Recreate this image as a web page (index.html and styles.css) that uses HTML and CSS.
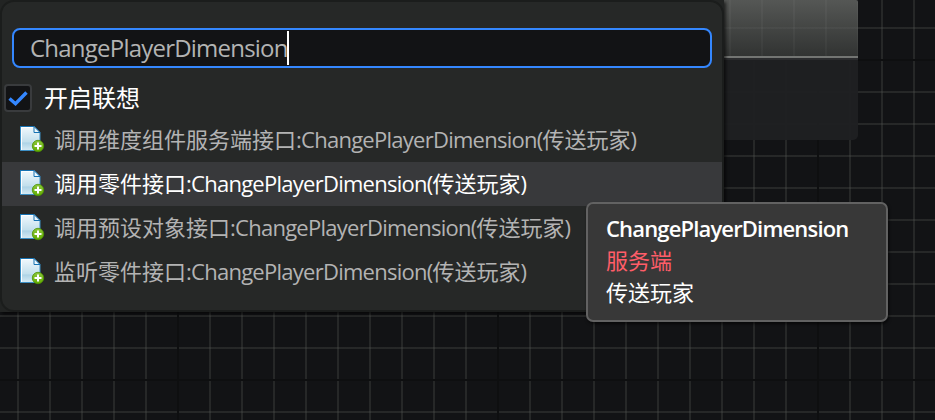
FILE: index.html
```html
<!DOCTYPE html>
<html lang="zh-CN">
<head>
<meta charset="utf-8">
<title>ChangePlayerDimension</title>
<link rel="stylesheet" href="styles.css">
</head>
<body>
<svg class="defs" aria-hidden="true">
  <defs>
    <linearGradient id="paper" x1="0" y1="0" x2="0" y2="1"><stop offset="0" stop-color="#f2f9fd"/><stop offset=".65" stop-color="#c2dfec"/><stop offset=".68" stop-color="#add3e6"/><stop offset="1" stop-color="#d8ebf4"/></linearGradient>
    <linearGradient id="plus" x1="0" y1="0" x2="0" y2="1"><stop offset="0" stop-color="#8cc63c"/><stop offset="1" stop-color="#62ad00"/></linearGradient>
    <symbol id="doc-add" viewBox="0 0 26 28">
      <path d="M1.5 1.5H15l6 6V25.5H1.5Z" fill="url(#paper)" stroke="#3c8fc4"/>
      <path d="M2.5 25V2.5H14" fill="none" stroke="#fff"/>
      <path d="M1 1.5H15" stroke="#1672b2"/>
      <path d="M15 1.5v6h6Z" fill="#edf7fc" stroke="#1672b2"/>
      <circle cx="19" cy="21" r="5.7" fill="url(#plus)" stroke="#4c9200" stroke-width=".8"/>
      <path d="M19 17.5v7M15.5 21h7" stroke="#fff" stroke-width="2"/>
    </symbol>
  </defs>
</svg>
<main class="canvas">
  <div class="node"><div class="node-head"></div></div>
  <section class="popup"><div class="panel">
    <div class="search"><span class="query">ChangePlayerDimension</span><span class="caret"></span></div>
    <div class="suggest">
      <span class="checkbox"><svg width="20" height="16" viewBox="0 0 20 16"><path d="M1.5 8.5l6 5.2L18.5 2.5" fill="none" stroke="#3487ff" stroke-width="3.4"/></svg></span>
      <span class="suggest-label">开启联想</span>
    </div>
    <ul class="results">
      <li class="row"><svg class="icon"><use href="#doc-add"/></svg><span class="name">调用维度组件服务端接口<span class="latin">:ChangePlayerDimension(</span>传送玩家<span class="latin">)</span></span></li>
      <li class="row selected"><svg class="icon"><use href="#doc-add"/></svg><span class="name">调用零件接口<span class="latin">:ChangePlayerDimension(</span>传送玩家<span class="latin">)</span></span></li>
      <li class="row"><svg class="icon"><use href="#doc-add"/></svg><span class="name">调用预设对象接口<span class="latin">:ChangePlayerDimension(</span>传送玩家<span class="latin">)</span></span></li>
      <li class="row"><svg class="icon"><use href="#doc-add"/></svg><span class="name">监听零件接口<span class="latin">:ChangePlayerDimension(</span>传送玩家<span class="latin">)</span></span></li>
    </ul>
  </div></section>
  <aside class="tooltip">
    <div class="tip-title">ChangePlayerDimension</div>
    <div class="tip-side">服务端</div>
    <div>传送玩家</div>
  </aside>
</main>
</body>
</html>
```
FILE: styles.css
```css
* { box-sizing: border-box; }
body { margin: 0; background: #121315; font-family: "Open Sans", "Noto Sans CJK SC", sans-serif; }
.defs { position: absolute; width: 0; height: 0; }
.canvas {
  position: relative; width: 935px; height: 420px; overflow: hidden;
  background:
    linear-gradient(90deg, #0e0f10 2px, transparent 2px) 177px 0 / 320px 100%,
    linear-gradient(#0e0f10 2px, transparent 2px) 0 59px / 100% 320px,
    linear-gradient(90deg, rgba(90, 92, 88, .28) 2px, transparent 2px) 17px 0 / 32px 100%,
    linear-gradient(rgba(90, 92, 88, .28) 2px, transparent 2px) 0 27px / 100% 32px,
    #121315;
}
.node { position: absolute; left: 500px; top: 0; width: 358px; height: 140px; border-radius: 0 2px 5px 5px; background: rgba(31, 32, 34, .97); }
.node-head {
  height: 60px; border-bottom: 2px solid #2b2c2e; border-radius: 0 2px 0 0;
  box-shadow: inset 0 -2px #737573;
  background:
    linear-gradient(90deg, rgba(255, 255, 255, .03) 2px, transparent 2px) 5px 0 / 32px 100%,
    linear-gradient(transparent 27px, rgba(255, 255, 255, .03) 27px 29px, transparent 29px),
    linear-gradient(#555755, #303231);
}
.popup { position: relative; width: 724px; height: 312px; background: #222423; box-shadow: 2px 2px 3px rgba(0, 0, 0, .6); }
.panel { height: 312px; border: 2px solid #1b1d1c; border-radius: 14px; background: #262827; padding-top: 26px; }
.search { display: flex; align-items: center; width: 700px; height: 40px; margin-left: 10px; padding-left: 16px; border: 2px solid #3487ff; border-radius: 8px; background: #121315; color: #b3b3b3; font-size: 24px; line-height: 36px; }
.query { width: 257px; white-space: nowrap; letter-spacing: -.78px; }
.caret { width: 2px; height: 34px; background: #fff; }
.suggest { display: flex; align-items: center; height: 28px; margin: 16px 0 0 2px; }
.checkbox { display: flex; align-items: center; justify-content: center; width: 28px; height: 28px; border: 2px solid #393b3d; border-radius: 4px; background: #121315; }
.suggest-label { margin-left: 12px; color: #fff; font-size: 24px; line-height: 28px; }
.results { list-style: none; margin: 6px 0 0; padding: 0; }
.row { display: flex; align-items: center; height: 44px; padding-left: 17px; color: #b3b3b3; font-size: 22px; line-height: 30px; white-space: nowrap; }
.name { padding-bottom: 2px; }
.selected { background: #38393b; color: #fff; }
.icon { width: 26px; height: 28px; margin: -3px 9px 0 0; }
.latin { letter-spacing: -.74px; }
.tooltip { position: absolute; left: 586px; top: 202px; width: 302px; height: 120px; padding: 8px 18px; border: 2px solid #626262; border-radius: 7px; background: #383838; color: #fff; font-size: 22px; line-height: 32px; box-shadow: 1px 2px 3px rgba(0, 0, 0, .6); }
.tip-title { font-weight: 600; letter-spacing: -.84px; }
.tip-side { color: #ff5d68; }
```
